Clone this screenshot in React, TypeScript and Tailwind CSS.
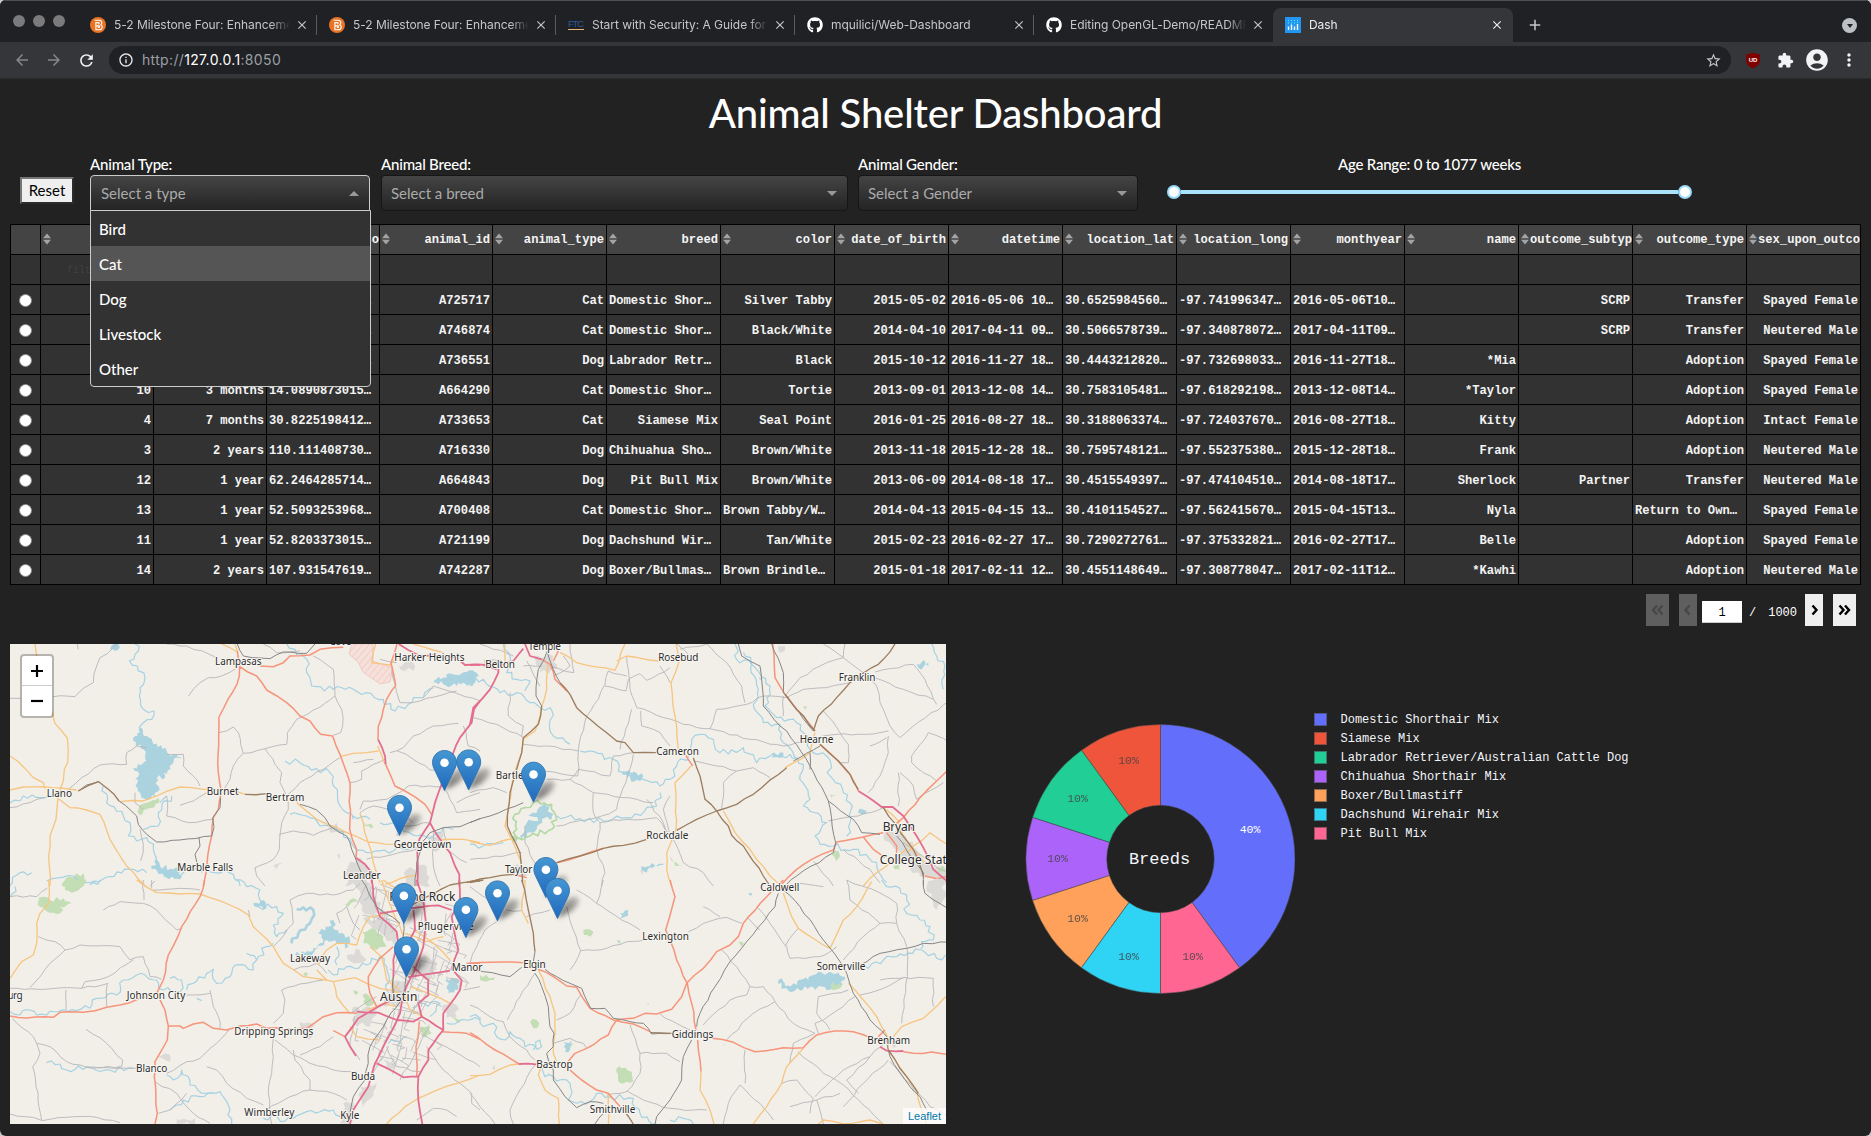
import React from "react";
import { FaGithub } from "react-icons/fa";
import {
  MdAccountCircle,
  MdAdd,
  MdArrowBack,
  MdArrowForward,
  MdClose,
  MdExtension,
  MdInfoOutline,
  MdMoreVert,
  MdRefresh,
  MdStarBorder,
} from "react-icons/md";

/* ---------------------------------------------------------------- browser */

function BrightspaceIcon() {
  return (
    <svg width="16" height="16" viewBox="0 0 16 16">
      <circle cx="8" cy="8" r="8" fill="#e87424" />
      <path
        d="M4.600 3.200h4.400c3.600 0 3.400 4.100 1.400 4.500 2.800.4 2.400 5.100-1.400 5.100H5.900V5.600h2.500c1 0 1 1.300 0 1.300M5.900 8.900h2.900c1 0 1 1.500 0 1.500H7.800"
        fill="none"
        stroke="#fff"
        strokeWidth="1.100"
      />
    </svg>
  );
}

function FtcIcon() {
  return (
    <svg width="16" height="16" viewBox="0 0 16 16">
      <text x="8" y="10" textAnchor="middle" textLength="16" fontSize="9.500" fontFamily="Liberation Sans" fill="#2a5896">
        FTC
      </text>
      <path d="M0 12.500H16" stroke="#eab57a" />
    </svg>
  );
}

function DashIcon() {
  return (
    <svg width="16" height="16" viewBox="0 0 16 16">
      <rect width="16" height="16" fill="#2196f3" />
      <path d="M3.500 13V9.500M6.500 13V7.500M9.500 13V9.500M12.500 13V7" stroke="#fff" strokeWidth="1.400" />
      <path
        d="M3 3.500h1M6 3.500h1M9 3.500h1M12 3.500h1M3 6h1M6 6h1M9 6h1M12 5.500h1"
        stroke="#5ff0e4"
        strokeWidth="1.200"
      />
    </svg>
  );
}

const tabs: { title: string; icon: React.ReactNode; active?: boolean; noLine?: boolean }[] = [
  { title: "5-2 Milestone Four: Enhancement", icon: <BrightspaceIcon /> },
  { title: "5-2 Milestone Four: Enhancement", icon: <BrightspaceIcon /> },
  { title: "Start with Security: A Guide for B", icon: <FtcIcon /> },
  { title: "mquilici/Web-Dashboard", icon: <FaGithub size={16} color="#fff" /> },
  { title: "Editing OpenGL-Demo/README", icon: <FaGithub size={16} color="#fff" />, noLine: true },
  { title: "Dash", icon: <DashIcon />, active: true },
];

function TabStrip() {
  return (
    <div className="flex h-[42px] items-end border-t border-[#4e5155] bg-[#202124] font-['Inter',sans-serif]">
      <div className="flex h-[41px] w-[78px] shrink-0 gap-2 pl-[13px] pt-[14px]">
        <i className="h-3 w-3 rounded-full bg-[#7b7b7d]" />
        <i className="h-3 w-3 rounded-full bg-[#7b7b7d]" />
        <i className="h-3 w-3 rounded-full bg-[#7b7b7d]" />
      </div>
      {tabs.map((t, i) => (
        <div
          key={i}
          className={
            t.active
              ? "relative flex h-[34px] w-[240px] shrink-0 items-center rounded-t-lg bg-[#35363a] pl-3 pr-[9px] text-[#eceded]"
              : "flex h-[34px] w-[239px] shrink-0 items-center pl-3 text-[#c4c7ca]"
          }
        >
          <span className="shrink-0">{t.icon}</span>
          <span className="ml-2 w-[178px] overflow-hidden whitespace-nowrap text-[12px] tracking-[-0.05px] [mask-image:linear-gradient(to_right,#000_88%,transparent_99%)]">
            {t.title}
          </span>
          <MdClose size={14} className="ml-[3px] shrink-0" />
          {!t.active && !t.noLine && <i className="ml-[7px] h-5 w-px bg-[#5a5c60]" />}
        </div>
      ))}
      <div className="flex h-[34px] flex-1 items-center justify-between pl-[13px] pr-[14px] text-[#c4c7ca]">
        <MdAdd size={18} />
        <span className="flex h-[15px] w-[15px] items-center justify-center rounded-full bg-[#bdc1c6]">
          <i className="mt-px border-x-[3px] border-t-4 border-x-transparent border-t-[#202124]" />
        </span>
      </div>
    </div>
  );
}

function Toolbar() {
  return (
    <div className="flex h-[37px] items-center border-b border-[#2b2c2e] bg-[#35363a] font-['Inter',sans-serif]">
      <div className="flex w-[109px] shrink-0 items-center gap-[14px] pl-[13px]">
        <MdArrowBack size={18} color="#85878b" />
        <MdArrowForward size={18} color="#85878b" />
        <MdRefresh size={19} color="#f1f3f4" />
      </div>
      <div className="flex h-7 w-[1622px] shrink-0 items-center rounded-full bg-[#202124] pl-[9px] pr-[9px]">
        <MdInfoOutline size={16} color="#e8eaed" />
        <span className="ml-2 pb-px text-[14px] tracking-[0.34px] text-[#9aa0a6]">
          http://<span className="text-white">127.0.0.1</span>:8050
        </span>
        <MdStarBorder size={17} color="#c4c7ca" className="ml-auto" />
      </div>
      <div className="flex flex-1 items-center pl-[14px]">
        <svg width="16" height="17" viewBox="0 0 16 17">
          <path d="M8 0.500c2 1.400 4.500 1.600 6.800 1.700v7c0 3.500-3.600 5.500-6.800 7.300C4.800 14.700 1.200 12.700 1.200 9.200v-7C3.500 2.100 6 1.900 8 .500z" fill="#800000" />
          <text x="8" y="10.300" textAnchor="middle" fontSize="6" fontWeight="700" fontFamily="Liberation Sans" fill="#fff">
            UD
          </text>
        </svg>
        <MdExtension size={17} color="#f1f3f4" className="ml-4" />
        <MdAccountCircle size={26} color="#f1f3f4" className="ml-[10px]" />
        <MdMoreVert size={20} color="#f1f3f4" className="ml-[9px]" />
      </div>
    </div>
  );
}

/* ---------------------------------------------------------------- filters */

function Caret({ up }: { up?: boolean }) {
  return (
    <i
      className={
        up
          ? "border-x-[5px] border-b-[5px] border-x-transparent border-b-[#999]"
          : "border-x-[5px] border-t-[5px] border-x-transparent border-t-[#999]"
      }
    />
  );
}

function SelectBox({ text, open }: { text: string; open?: boolean }) {
  return (
    <div
      className={
        open
          ? "flex h-9 items-center justify-between rounded-t-[4px] border border-[#ccc] bg-linear-to-b from-[#454545] to-[#242424] pl-[10px] pr-[10px] text-[15px] text-[#aaa]"
          : "flex h-9 items-center justify-between rounded-[4px] border border-[#161616] bg-linear-to-b from-[#454545] to-[#242424] pl-[9px] pr-[10px] text-[15px] text-[#aaa]"
      }
    >
      <span className="pt-px">{text}</span>
      <Caret up={open} />
    </div>
  );
}

function Filters() {
  return (
    <div className="flex h-[69px] items-start pl-5 font-['Lato',sans-serif] text-[15px] text-white">
      <button className="mt-[22px] h-[27px] w-[54px] border-2 border-b-[#2c2c2c] border-l-[#767676] border-r-[#2c2c2c] border-t-[#767676] bg-[#efefef] text-[15px] leading-[23px] text-black">
        Reset
      </button>
      <div className="relative ml-4 w-[280px]">
        <div className="h-5 font-medium leading-[18px] tracking-[-0.2px]">Animal Type:</div>
        <SelectBox text="Select a type" open />
        <div className="absolute left-0 top-[55px] z-10 w-[281px] rounded-b-[4px] border border-[#ccc] bg-[#323232] font-medium">
          {["Bird", "Cat", "Dog", "Livestock", "Other"].map((o) => (
            <div
              key={o}
              className={
                o === "Cat"
                  ? "h-[35px] bg-[#555] pl-2 leading-[36px]"
                  : "h-[35px] pl-2 leading-[36px]"
              }
            >
              {o}
            </div>
          ))}
        </div>
      </div>
      <div className="ml-[11px] w-[467px]">
        <div className="h-5 font-medium leading-[18px] tracking-[-0.2px]">Animal Breed:</div>
        <SelectBox text="Select a breed" />
      </div>
      <div className="ml-[10px] w-[280px]">
        <div className="h-5 font-medium leading-[18px] tracking-[-0.2px]">Animal Gender:</div>
        <SelectBox text="Select a Gender" />
      </div>
      <div className="ml-[29px] w-[525px]">
        <div className="h-5 text-center font-medium leading-[18px] tracking-[-0.2px]">Age Range: 0 to 1077 weeks</div>
        <div className="mt-[10px] flex h-[14px] items-center">
          <i className="h-[14px] w-[14px] rounded-full border-2 border-[#96dbfa] bg-white" />
          <i className="h-1 flex-1 bg-[#abe2fb]" />
          <i className="h-[14px] w-[14px] rounded-full border-2 border-[#96dbfa] bg-white" />
        </div>
      </div>
    </div>
  );
}

/* ------------------------------------------------------------------ table */

const columns = [
  "rec_num",
  "age_upon_outcome",
  "age_upon_outcome_in_weeks",
  "animal_id",
  "animal_type",
  "breed",
  "color",
  "date_of_birth",
  "datetime",
  "location_lat",
  "location_long",
  "monthyear",
  "name",
  "outcome_subtype",
  "outcome_type",
  "sex_upon_outcome",
];

const rows: string[][] = [
  ["1", "1 year", "52.9215277777…", "A725717", "Cat", "Domestic Shor…", "Silver Tabby", "2015-05-02", "2016-05-06 10…", "30.6525984560…", "-97.741996347…", "2016-05-06T10…", "", "SCRP", "Transfer", "Spayed Female"],
  ["2", "3 years", "156.767857142…", "A746874", "Cat", "Domestic Shor…", "Black/White", "2014-04-10", "2017-04-11 09…", "30.5066578739…", "-97.340878072…", "2017-04-11T09…", "", "SCRP", "Transfer", "Neutered Male"],
  ["9", "1 year", "58.8255952380…", "A736551", "Dog", "Labrador Retr…", "Black", "2015-10-12", "2016-11-27 18…", "30.4443212820…", "-97.732698033…", "2016-11-27T18…", "*Mia", "", "Adoption", "Spayed Female"],
  ["10", "3 months", "14.0890873015…", "A664290", "Cat", "Domestic Shor…", "Tortie", "2013-09-01", "2013-12-08 14…", "30.7583105481…", "-97.618292198…", "2013-12-08T14…", "*Taylor", "", "Adoption", "Spayed Female"],
  ["4", "7 months", "30.8225198412…", "A733653", "Cat", "Siamese Mix", "Seal Point", "2016-01-25", "2016-08-27 18…", "30.3188063374…", "-97.724037670…", "2016-08-27T18…", "Kitty", "", "Adoption", "Intact Female"],
  ["3", "2 years", "110.111408730…", "A716330", "Dog", "Chihuahua Sho…", "Brown/White", "2013-11-18", "2015-12-28 18…", "30.7595748121…", "-97.552375380…", "2015-12-28T18…", "Frank", "", "Adoption", "Neutered Male"],
  ["12", "1 year", "62.2464285714…", "A664843", "Dog", "Pit Bull Mix", "Brown/White", "2013-06-09", "2014-08-18 17…", "30.4515549397…", "-97.474104510…", "2014-08-18T17…", "Sherlock", "Partner", "Transfer", "Neutered Male"],
  ["13", "1 year", "52.5093253968…", "A700408", "Cat", "Domestic Shor…", "Brown Tabby/W…", "2014-04-13", "2015-04-15 13…", "30.4101154527…", "-97.562415670…", "2015-04-15T13…", "Nyla", "", "Return to Own…", "Spayed Female"],
  ["11", "1 year", "52.8203373015…", "A721199", "Dog", "Dachshund Wir…", "Tan/White", "2015-02-23", "2016-02-27 17…", "30.7290272761…", "-97.375332821…", "2016-02-27T17…", "Belle", "", "Adoption", "Spayed Female"],
  ["14", "2 years", "107.931547619…", "A742287", "Dog", "Boxer/Bullmas…", "Brown Brindle…", "2015-01-18", "2017-02-11 12…", "30.4551148649…", "-97.308778047…", "2017-02-11T12…", "*Kawhi", "", "Adoption", "Neutered Male"],
];

const gridRow =
  "grid grid-cols-[30px_repeat(4,113px)_repeat(12,114px)] border-b border-l border-black";

function SortIcon() {
  return (
    <svg width="8" height="12" viewBox="0 0 8 12" className="-mt-px shrink-0">
      <path d="M4 0.500 8 5.300H0zM4 11.500 0 6.700H8z" fill="#a3a3a3" />
    </svg>
  );
}

function DataTable() {
  return (
    <div className="ml-[10px] w-[1851px] border-t border-black font-['Liberation_Mono',monospace] text-[12.15px] font-bold text-[#f4f4f4]">
      <div className={gridRow}>
        <div className="h-[29px] border-r border-black bg-[#444]" />
        {columns.map((c) => (
          <div
            key={c}
            className={
              c.length > 13
                ? "flex h-[29px] items-center overflow-hidden border-r border-black bg-[#444] pl-[2px]"
                : "flex h-[29px] items-center overflow-hidden border-r border-black bg-[#444] pl-[2px] pr-[2px]"
            }
          >
            <SortIcon />
            <span className="-ml-px flex min-w-0 flex-1 justify-end pt-px">
              <span className={c.length > 13 ? "w-[102px] shrink-0 overflow-hidden whitespace-nowrap" : "whitespace-nowrap"}>{c}</span>
            </span>
          </div>
        ))}
      </div>
      <div className={gridRow}>
        <div className="h-[29px] border-r border-black bg-[#323232]" />
        {columns.map((c, i) => (
          <div key={c} className="h-[29px] overflow-hidden border-r border-black bg-[#323232] pl-[26px] text-[10px] font-normal leading-[32px] text-[#414141]">
            {i === 0 ? "filter data..." : ""}
          </div>
        ))}
      </div>
      {rows.map((r, k) => (
        <div key={k} className={gridRow}>
          <div className="flex h-[29px] items-center justify-center border-r border-black bg-[#323232] pt-px">
            <i className="h-[13px] w-[13px] rounded-full border border-[#8a8a8a] bg-white" />
          </div>
          {r.map((v, i) => (
            <div
              key={i}
              className={
                v.endsWith("…")
                  ? "h-[29px] overflow-hidden whitespace-nowrap border-r border-black bg-[#323232] pl-[2px] text-left leading-[33px]"
                  : "h-[29px] overflow-hidden whitespace-nowrap border-r border-black bg-[#323232] pr-[2px] text-right leading-[33px]"
              }
            >
              {v}
            </div>
          ))}
        </div>
      ))}
    </div>
  );
}

function Chevrons({ d }: { d: string }) {
  return (
    <svg width="13" height="12" viewBox="0 0 13 12" fill="none" stroke="currentColor" strokeWidth="2.400">
      <path d={d} />
    </svg>
  );
}

function Pagination() {
  return (
    <div className="flex h-[59px] items-start justify-end pr-[15px] pt-[9px] font-['Liberation_Mono',monospace] text-[12px] text-white">
      <span className="flex h-8 w-[23px] items-center justify-center bg-[#5f5f5f] text-[#474747]">
        <Chevrons d="M6 1.500 2 6l4 4.500M11.500 1.500 7.500 6l4 4.500" />
      </span>
      <span className="ml-[10px] flex h-8 w-[18px] items-center justify-center bg-[#5f5f5f] text-[#474747]">
        <Chevrons d="M8.500 1.500 4.500 6l4 4.500" />
      </span>
      <span className="ml-[5px] mt-[7px] h-[22px] w-10 border-b border-[#ccc] bg-white text-center leading-[24px] text-black">
        1
      </span>
      <span className="ml-[7px] mt-[7px] leading-[25px]">/</span>
      <span className="ml-[12px] mt-[7px] leading-[25px]">1000</span>
      <span className="ml-[8px] flex h-8 w-[18px] items-center justify-center bg-[#efefef] text-black">
        <Chevrons d="M4.500 1.500 8.500 6l-4 4.500" />
      </span>
      <span className="ml-[10px] flex h-8 w-[23px] items-center justify-center bg-[#efefef] text-black">
        <Chevrons d="M1.500 1.500 5.500 6l-4 4.500M7 1.500 11 6l-4 4.500" />
      </span>
    </div>
  );
}

/* -------------------------------------------------------------------- map */

/* Each tile keeps its geometry in thirds of a pixel from its own corner. */
type Tile = {
  x: number;
  y: number;
  urban: string;
  green: string;
  lake: string;
  water: string;
  minor: string;
  rail: string;
  brown: string;
  orange: string;
  salmon: string;
  pink: string;
};

const tiles: Tile[] = [
  {
    x: -10,
    y: -8,
    urban: "M1045 690 1085 665 1105 715 1085 750 1035 750Z M980 570 1010 560 1015 585 990 590Z M1290 600 1330 590 1320 640 1280 640Z M820 690 850 680 830 698Z M1220 700 1280 690 1290 750 1210 750Z M1190 85 1240 80 1240 105 1200 100Z M1010 655 1020 655 1020 670Z",
    green: "M415 520 440 500 475 485 478 500 440 520 415 545Z M200 725 250 712 255 740 240 755 185 750Z M1090 558 1120 570 1115 578 1095 570Z",
    lake: "M405 300 412 310 425 275 432 300 455 308 460 325 500 345 512 360 545 362 520 380 512 400 490 410 495 425 470 425 475 450 465 480 425 485 412 440 405 430 418 415 400 395 430 380 435 365 430 340 400 315Z M470 660 480 690 520 700 545 705 540 730 500 725 455 700Z M1300 140 1315 122 1340 125 1350 112 1375 118 1400 108 1425 108 1420 145 1390 140 1370 150 1330 145Z M340 24 355 24 345 45 330 40Z",
    water: "M405 24 415 45 388 75 412 90 435 125 420 155 418 180 430 220 462 225 455 250 430 260 425 290 M860 24 890 55 920 70 920 110 935 150 1000 160 1060 160 1100 170 1150 190 1185 225 1225 205 1240 185 1270 185 1300 155 M855 375 900 380 950 398 990 410 1000 450 1015 500 1040 530 1060 550 M870 535 920 540 960 570 1030 590 1060 630 1100 650 1180 645 1250 635 M1140 560 1190 570 1250 600 1300 600 1330 575 1360 580 M310 450 320 500 370 540 390 560 385 600 410 615 440 605 460 640 475 690 500 710 540 720 580 700 620 700 700 715 720 750 M515 480 475 530 475 570 430 580 M500 480 480 500 M30 500 70 480 135 485 175 475 M30 750 60 710 95 710 M140 735 180 725 220 720 260 740 330 722 400 700 440 710 M1060 540 1110 550",
    minor: "M30 187 62 187 M160 182 225 182 252 156 280 140 290 90 300 65 340 35 350 24 M232 24 235 40 M205 460 245 425 300 387 380 385 380 350 410 330 440 335 M566 180 600 140 625 125 665 120 712 95 M500 24 560 30 650 65 M657 290 700 273 715 290 722 325 730 352 795 338 860 325 862 290 890 250 940 222 1005 180 1025 220 1028 270 1022 290 1000 298 M730 352 700 390 690 430 672 460 M795 338 825 385 845 410 840 440 860 480 865 520 845 560 838 640 820 670 765 695 770 720 795 750 M860 480 900 440 970 400 1020 365 M500 355 550 355 550 390 580 420 600 450 M540 508 580 495 620 470 M500 480 500 540 525 545 565 560 640 550 M405 470 405 500 430 520 M420 580 430 625 422 675 M838 595 880 585 940 598 1000 575 1045 590 M1050 440 1085 430 1085 405 1120 385 1155 370 M1170 350 1210 335 1240 300 1300 270 1375 262 M1192 345 1240 370 1290 402 1330 400 M1005 180 1000 100 940 60 M1080 520 1090 495 1160 490 1225 450 1330 452 M1175 100 1190 170 1200 200 1260 195 1370 165 M1100 670 1180 655 1250 640 M1390 270 1405 330 1440 345 M1330 455 1350 490 1370 530 1440 520 M30 515 90 500 135 485 M1270 185 1300 150 1330 160 1440 195 M1060 380 1120 370 M790 24 830 50 900 45 M1080 530 1120 510 1200 525 1240 560 M1140 70 1190 80 M1370 500 1440 470 M1300 590 1300 690 1320 750 M1330 575 1340 640 1400 680 M450 750 465 735 M1190 600 1210 570 1290 560",
    rail: "M235 465 260 447 296 437 M357 495 410 540 415 565 440 595 470 618 540 612 635 600 642 575 638 545 660 515 662 485 M597 605 600 630 585 655 592 685 M900 505 950 522 975 545 990 570 1040 600 1055 640 1075 690 1090 735 M730 60 810 68 850 48 920 52 945 24 M712 24 730 60 M1440 548 1380 572 1330 575 1290 590 1265 620 1250 680 1245 750",
    brown: "M235 465 296 437 325 460 357 495 M735 475 800 473 M1440 730 1400 740",
    orange: "M105 24 110 60 M155 225 165 262 185 285 202 306 203 380 193 400 190 435 180 462 173 495 168 550 150 600 146 660 150 750 M30 360 70 392 100 425 130 440 135 458 M30 462 70 453 155 455 230 462 M178 490 210 515 260 522 300 535 330 610 380 690 437 750 M360 497 430 495 470 480 500 466 540 453 610 460 700 463 735 475 M880 475 895 505 950 550 1040 590 1104 618 1180 625 M1020 362 1060 352 1100 350 1135 345 M1080 532 1104 618 1130 710 1140 740 M1133 330 1155 385 M1127 24 1115 80 1170 87 1185 70 M705 24 712 45 M665 24 712 48 M1440 620 1390 610 1320 612 M1155 745 1200 728 1250 718 M1240 24 1330 50",
    salmon: "M712 45 714 60 719 90 718 120 700 165 657 243 656 300 655 410 664 470 655 520 640 545 635 600 623 660 618 710 610 750 M719 92 770 120 800 162 860 200 900 240 930 255 962 295 998 300 1020 355 1050 440 1049 580 1070 640 1068 665 M780 90 820 92 850 80 870 60 930 57 960 40 1030 34 M1191 24 1173 80 1187 148 1160 190 1150 220 1135 270 1134 310 M1157 385 1185 450 1215 465 1275 505 1295 535",
    pink: "M1134 310 1155 360 1157 385 M1196 24 1225 42 1260 60 1300 58 1370 65 1395 87 1440 87 M1440 195 1422 220 1415 260 1380 305 1360 350 1330 430 1305 500 1290 560 1258 610 1252 650 1252 750 M1290 560 1320 610 1350 650 1365 690 1378 715 1378 750 M1068 665 1095 685 1115 710 1115 740",
  },
  {
    x: 460,
    y: -8,
    urban: "M1240 600 1280 580 1340 640 1380 690 1440 700 1440 750 1350 720 1320 690 1290 650Z M925 30 945 30 945 45 930 50Z M190 60 250 60 260 100 210 110Z M40 70 90 70 90 90 40 95Z M130 690 170 690 170 720 130 720Z M510 705 525 700 520 718Z",
    green: "M1085 655 1105 645 1110 660 1098 675Z M980 420 990 425 985 435Z M600 660 620 680 640 690 615 690Z M1080 475 1100 478 1085 485Z M1270 690 1295 680 1290 705Z M1400 695 1425 695 1410 710Z M125 600 145 605 130 618Z M1000 210 1012 212 1005 222Z",
    lake: "M170 560 195 555 210 540 175 540 215 510 240 510 245 550 225 545 200 580 155 610 150 600 165 580Z M0 105 20 110 15 135 0 150Z M515 690 540 690 550 675 548 695 530 710Z M1168 518 1195 515 1190 532 1175 535Z M1340 85 1355 78 1375 80 1375 90 1345 95Z M460 405 520 420 500 432 470 425Z M865 120 878 125 870 132Z M905 352 940 350 930 365 905 365Z",
    water: "M0 130 40 130 90 170 140 170 180 200 210 215 240 215 250 300 300 325 M330 345 360 345 430 370 460 410 520 430 570 450 600 430 620 390 655 360 665 310 690 295 730 310 750 350 820 335 860 380 900 360 960 355 1000 385 990 430 1020 490 1000 510 1070 560 1035 600 1050 625 1090 630 1150 640 1220 680 1250 740 M105 24 120 80 110 110 140 130 180 135 165 165 M260 540 330 548 400 555 470 545 560 510 570 470 M795 24 800 70 845 80 865 160 850 205 880 260 930 265 940 320 980 370 M820 50 860 100 900 150 885 210 920 245 980 260 1000 290 1020 340 1070 360 1080 420 1120 470 1140 500 1140 560 1130 600 M1385 24 1400 60 1425 90 1420 160 M0 625 40 630 100 620 M560 690 580 685",
    minor: "M120 170 115 240 160 270 155 300 M10 245 80 265 160 305 M160 325 230 330 325 345 350 240 385 190 405 145 415 105 470 120 M405 150 468 165 475 130 510 113 530 133 600 95 M325 345 323 420 205 400 M300 430 325 400 420 420 430 360 490 350 M470 60 480 160 500 215 640 265 720 278 840 310 940 330 1060 300 1230 290 1255 285 M570 90 600 140 M630 40 710 24 770 80 815 150 825 200 M720 278 740 220 830 205 880 180 950 185 M945 180 990 125 1050 90 1120 65 1125 24 M950 185 1000 160 1070 155 1140 140 M1060 24 1120 65 1180 110 1220 150 1230 200 1260 270 1290 305 1330 270 1440 195 M1215 108 1330 85 1365 130 1400 205 M1215 125 1300 160 1390 190 M940 180 940 240 M1060 225 1110 290 1135 325 1135 380 1110 380 M485 220 450 340 M512 225 515 270 570 290 600 330 M490 355 440 520 395 540 300 560 260 570 M230 430 300 430 370 470 500 490 550 500 M370 470 370 530 390 560 380 640 405 710 395 750 M390 560 470 550 560 545 600 600 M670 375 740 390 800 405 850 395 900 425 M800 405 760 440 755 520 M0 470 70 455 110 470 M0 670 120 655 155 650 M610 610 640 680 700 710 730 750 M1255 300 1255 350 1230 420 1195 470 M1440 320 1375 290 1325 360 1325 380 1360 410 1400 435 M1290 410 1330 450 1340 490 1420 440 M1285 410 1285 510 M1075 555 1165 540 1240 515 M1030 675 1090 750 M1120 640 1200 700 1230 740 M165 570 165 620 200 690 M530 490 580 560 600 600 M300 24 312 110 240 90 M620 24 660 60 M130 60 30 24 M600 480 580 520 600 600 M1300 620 1440 720 M160 90 215 90 M250 120 300 90 280 60 M170 75 210 150 M1250 305 1200 330",
    rail: "M232 45 205 100 198 180 215 210 M232 50 250 100 270 140 M805 24 815 60 870 90 880 210 930 270 950 285 1020 390 1075 495 1097 620 1090 650 980 720 950 745 M905 24 940 110 940 170 1030 285 M1075 495 1150 550 1175 590 1230 595 M1280 600 1360 710 1360 750 M970 375 1050 330 M0 560 60 540 160 500 M1020 400 1020 350",
    brown: "M1275 24 1240 70 1225 85 1185 108 1140 140 1100 185 1045 240 1030 285 M270 140 300 175 320 215 360 250 410 290 440 315 465 320 490 350 560 350 M670 365 690 420 705 490 740 525 775 570 785 598 820 630 880 720 900 750 M620 583 680 550 740 525 800 505 850 475 950 395 M215 210 205 265 160 305 155 350 120 470 112 570 150 650 158 740 M260 680 330 660 400 637 460 628 530 610 M0 738 60 725 130 715 M1035 285 945 175 M1050 325 1105 375 1140 415 1165 460 M1240 515 1330 640 1360 720",
    orange: "M100 24 105 80 M270 50 320 80 435 103 465 24 M440 75 470 60 565 75 M618 24 628 75 603 140 615 240 625 340 M235 80 230 160 210 240 195 285 160 310 155 350 130 420 105 570 125 610 155 680 M0 617 60 628 125 608 M663 390 615 440 618 500 618 580 590 650 590 700 605 750 M760 525 795 590 840 640 900 720 940 750 M945 395 1020 350 1035 290 M1240 515 1285 555 1300 600 1325 640 1365 680 M1310 650 1380 590 1440 630 M1180 750 1220 710 1310 640",
    salmon: "M215 70 240 85 255 130 290 165 M908 24 915 125 945 175 1035 285 M1050 325 1105 375 1140 415 1165 465 M645 355 668 390 M1440 395 1400 435 1350 485 1300 545 1265 575 M1240 590 1180 603 1100 618 1090 642 1025 670 980 700 935 745 M1180 603 1210 640 1245 665 M1365 720 1400 728 1440 720 M1250 590 1280 630 1280 680 M265 45 250 75 M260 680 330 660 400 637 M130 715 170 725",
    pink: "M0 87 45 87 80 100 M160 38 130 75 85 90 85 110 60 160 10 215 0 265 M165 24 180 60 215 70 M1165 465 1235 513 1268 513 1300 540 1340 600 1375 665 1390 700 1440 745",
  },
  {
    x: -10,
    y: 236,
    urban: "M1070 0 1110 10 1130 50 1150 90 1120 110 1085 90Z M1090 115 1170 115 1190 160 1180 195 1130 150Z M1040 225 1080 210 1100 240 1060 250Z M1230 210 1310 245 1290 300 1240 270Z M1190 300 1230 300 1220 370 1150 380Z M1060 380 1130 390 1110 440 1060 430Z M1330 375 1370 375 1370 410 1340 415Z M470 530 510 525 510 545Z M530 718 585 715 585 732 530 732Z M900 425 945 435 925 480Z M1030 670 1060 670 1050 732 1020 732Z M1080 620 1130 610 1090 690Z M1150 540 1190 555 1170 570Z",
    green: "M195 0 260 0 225 35 195 30Z M115 65 130 50 150 60 190 55 215 70 180 80 190 90 160 98 120 80Z M1085 155 1120 145 1150 170 1160 200 1130 210 1090 190Z M1095 340 1115 360 1120 385 1090 365Z M1260 440 1290 430 1295 460 1265 470Z M1035 75 1060 55 1075 65 1045 80Z M910 280 925 282 915 292Z M1290 290 1305 290 1300 310Z M1360 415 1385 415 1375 430Z M1060 330 1075 335 1070 345Z",
    lake: "M885 225 930 215 960 190 970 180 955 160 985 140 1000 120 1005 150 1050 180 1045 200 1010 190 980 180 950 205 920 228Z M760 70 790 60 800 85 770 82Z M1340 295 1370 295 1375 330 1345 340Z",
    water: "M705 0 740 20 780 30 775 80 830 80 850 100 820 135 830 170 860 150 M985 270 1000 285 1040 260 1100 255 1140 230 1160 260 1160 330 1190 350 1220 345 M1010 200 1010 255 M30 395 60 405 90 390 110 405 140 405 175 395 270 385 290 355 350 345 370 300 410 285 470 300 490 330 540 335 545 300 510 295 M560 330 580 310 620 280 640 268 650 310 690 290 705 255 760 270 770 240 800 200 820 190 M140 548 180 552 200 570 260 560 330 570 400 565 M500 585 520 600 545 570 570 615 620 640 660 635 690 690 695 732 M510 690 550 660 600 650 650 640 M790 715 880 715 920 695 1000 690 1020 710 M1165 490 1220 470 M1260 370 1320 370 1290 410 M1340 430 1440 420 M270 15 300 0 M30 50 45 20 M740 220 770 240 M590 355 605 362",
    minor: "M30 50 110 50 142 24 M115 170 165 185 195 210 240 195 360 200 390 240 430 230 450 290 485 298 M90 323 150 250 195 210 M30 325 245 325 325 310 M245 325 255 305 325 290 400 240 M198 330 198 390 M322 310 320 380 M310 90 360 65 430 70 470 90 530 150 545 145 M430 0 432 60 M37 415 100 470 110 490 120 520 98 560 108 620 125 720 M110 490 150 500 200 545 260 562 365 560 368 540 320 490 258 448 M258 562 440 565 M30 702 100 712 127 722 200 712 290 712 360 728 M500 580 560 545 600 535 650 490 690 445 M620 560 650 570 680 610 740 655 790 675 M630 330 640 380 655 410 660 445 M560 345 630 340 M465 605 530 640 580 700 630 730 M475 700 510 690 560 640 M820 470 820 530 815 580 805 640 815 732 M845 330 855 360 850 400 820 430 M845 330 900 312 970 300 M825 480 880 525 930 550 1000 570 1070 575 M900 525 960 500 1000 470 M800 690 870 650 930 630 1000 640 1040 660 M880 510 885 540 930 600 930 632 M745 90 750 110 M820 200 880 130 870 60 920 40 1000 45 1060 30 1080 10 M1280 500 1330 570 1380 610 1415 640 1415 670 1440 690 M1250 720 1300 685 1340 690 1370 710 M1290 440 1200 600 M1160 500 1190 560 1260 575 M1050 400 1080 380 1130 350 M1060 440 1050 500 1080 540 M455 0 455 25 M460 30 540 25 600 30 M1020 130 1010 100 1040 80 1060 130 1080 150 M880 270 950 250 980 280 M1390 330 1440 320 M1300 480 1440 560",
    rail: "M1210 120 1210 170 1222 260 1215 340 1160 420 1110 500 1095 600 1060 650 1050 700 M1085 0 1130 80 1200 130",
    brown: "M1230 80 1350 15 1440 3 M1180 290 1180 340",
    orange: "M146 0 146 70 120 100 110 130 110 190 100 225 65 245 30 295 M410 0 470 38 540 42 600 42 690 75 745 105 760 140 820 200 850 250 910 290 1000 305 1065 293 1100 310 1140 325 1200 340 M1000 305 1010 350 1050 400 M955 255 980 210 1010 190 1070 195 1090 140 1110 110 1160 100 M1145 0 1165 60 1200 140 1210 170 M1050 440 1070 470 1140 480 M1160 732 1215 680 1255 655 1300 635 1370 610 1440 585 M1240 150 1300 190 1350 240 M1210 340 1230 390 1270 410 M1230 320 1260 330 1350 370 M950 270 980 300 M1110 200 1145 230 1160 300 1200 330 M1215 160 1280 185 1330 170 M1190 380 1150 370 1100 390 M1200 30 1150 0",
    salmon: "M614 0 600 50 545 140 505 225 490 300 470 340 495 390 505 438 502 480 465 545 463 590 472 700 465 732 M30 408 80 414 160 412 180 397 250 397 320 382 360 375 390 368 440 350 M505 438 540 438 550 445 580 432 610 427 640 445 680 450 720 438 770 432 800 445 920 445 970 410 1010 398 1070 400 M1180 200 1140 235 1105 290 1110 340 1130 380 M1000 452 1035 470 M1440 478 1400 460 1325 455 M1258 425 1248 500 1250 590 M1400 250 1440 250",
    pink: "M1115 0 1120 50 1140 110 1190 155 1195 190 1180 240 1180 290 M1140 100 1230 85 1315 76 1355 90 M1250 0 1270 60 1278 130 1270 200 1240 280 1210 340 1205 370 1200 400 1150 500 1125 550 1105 620 1060 690 1050 732 M1070 395 1135 398 1190 420 1240 425 1265 410 1330 450 M1068 528 1035 470 1075 415 1135 380 1195 350 M1130 550 1210 592 1255 590 1285 540 1285 510 1330 450 1330 400 1380 330 1385 300 1355 265 1375 210 1355 110 1380 60 1378 0 M1225 292 1350 272 M1265 410 1255 370 1285 345 1285 300 1240 260 M1240 90 1245 150 1220 200 1215 260 M1255 590 1255 660 1267 732",
  },
  {
    x: 460,
    y: 236,
    urban: "M1370 20 1390 0 1425 0 1420 60 1400 90Z M1245 475 1290 480 1270 505Z M65 565 75 555 75 570Z",
    green: "M440 565 455 565 485 575 490 605 450 610Z M180 425 200 420 205 440 190 445Z M340 150 370 155 360 170 342 165Z M30 285 75 290 60 300 30 300Z M440 180 452 182 450 192Z M805 185 822 190 815 200Z M1070 310 1120 310 1100 328 1070 330Z M530 370 536 370 536 375Z M290 490 310 490 300 510Z",
    lake: "M925 300 940 305 945 318 980 315 985 300 1015 300 1030 285 1080 275 1125 290 1115 315 1090 308 1070 330 1020 320 975 332 950 325 925 312Z M280 485 305 480 300 510 285 515Z M450 100 475 90 465 110 450 115Z M835 40 848 40 842 48Z M755 490 768 490 762 497Z",
    water: "M0 410 30 415 40 440 70 430 80 470 105 480 120 455 150 475 165 500 215 500 210 480 190 510 M215 560 225 590 250 590 300 610 295 660 360 665 380 640 420 650 490 655 510 700 560 732 M600 720 640 715 670 732 M1235 0 1250 20 1290 25 1310 60 1310 100 1350 120 1380 140 1390 180 1355 185 1350 210 1280 230 1180 260 M1355 210 1400 235 1440 225",
    minor: "M0 250 20 200 45 150 80 125 M110 90 155 92 M170 110 240 90 M290 80 310 150 332 212 M320 30 380 70 455 120 510 150 M380 70 400 0 M332 212 410 205 470 185 525 180 M332 212 300 270 M655 155 700 130 770 112 815 130 M195 280 150 350 112 420 M0 375 25 385 60 410 100 425 120 470 170 510 195 540 M332 345 300 400 260 420 M250 490 300 475 340 490 350 505 M480 435 510 520 510 580 470 635 410 645 M570 402 620 430 660 450 M700 435 780 360 830 345 840 320 800 260 755 210 M840 320 880 320 915 365 970 430 1035 460 M915 365 850 400 770 480 M510 520 590 520 630 545 M470 632 520 660 600 685 670 690 710 690 M195 555 150 630 120 690 M0 640 30 680 75 732 M825 510 825 610 M760 732 775 670 810 615 870 670 910 720 M960 550 970 490 1035 460 M985 515 1060 580 1120 615 1180 675 1240 732 M1135 330 1045 350 1040 400 1080 450 M1155 350 1060 420 1035 430 1045 460 M1130 0 1140 60 1230 130 1280 130 1310 200 1312 290 1295 430 M1170 345 1240 325 1300 292 1390 295 1390 380 M1230 130 1180 170 1120 240 M1130 0 1200 25 1280 70 1280 130 M860 80 900 130 950 200 960 235 1050 230 1100 200 M985 145 945 200 M1250 480 1200 530 1130 600 1165 640 M1255 540 1180 610 1120 680 M935 610 980 600 1030 655 1020 700 M1035 650 1120 570 1200 530 M1040 660 1110 640 M1260 545 1380 680 1440 710 M830 110 870 150 M1230 300 1300 295 M960 680 1040 660 1060 732 M750 110 700 80 M120 690 130 732 M0 20 60 60 M990 10 1060 20",
    rail: "M190 245 195 215 M195 280 215 320 235 380 240 440 252 460 250 500 230 520 235 540 250 570 250 600 285 650 320 683 360 665 400 670 M0 265 40 275 120 290 155 262 M225 268 260 290 300 310 335 325 362 385 405 385 430 415 480 425 520 430 545 462 610 460 M925 40 915 80 780 245 735 320 690 400 680 440 M665 480 640 530 635 590 635 600 600 660 560 710 555 732 M940 30 990 80 1060 180 1110 245 1130 280 1150 340 1200 420 1250 470 1260 530 1320 620 1350 650 1370 690 M1170 255 1230 220 1310 205 1360 190 1440 187 M375 732 400 700 M1360 0 1365 40 1440 90",
    brown: "M155 0 175 90 190 160 195 215 M460 690 490 732 M540 458 605 460 M1255 510 1310 590 1345 640 M0 8 40 0",
    orange: "M165 0 155 90 175 130 M205 270 240 350 255 400 255 460 250 520 260 545 M0 587 60 583 120 555 147 552 M215 555 205 585 225 630 265 655 268 732 M415 640 415 732 M693 575 690 630 720 690 732 732 M940 40 965 110 985 145 1060 195 1080 205 1090 185 1120 120 1160 80 1205 5 M1135 310 1180 360 1220 410 1250 465 1255 510 1310 590 1340 630 1355 690 1370 732 M1440 340 1360 415 1295 440 1270 470 M1000 505 950 560 935 610 890 680 850 732 M1045 732 1060 720 1120 732 1200 720 1240 732",
    salmon: "M0 250 160 248 M205 268 250 290 290 318 320 322 360 385 430 420 490 432 540 455 M600 0 615 50 587 150 600 180 620 240 652 310 665 370 678 450 M683 480 693 575 M940 0 890 50 820 130 805 170 780 195 740 215 700 265 650 310 635 350 605 388 560 402 525 400 490 415 440 420 415 465 350 505 315 520 290 550 M725 475 790 487 855 515 940 503 1000 503 1040 465 1095 453 1150 455 1200 472 M0 458 75 510 147 552 M300 570 335 600 380 630 415 640 460 690 M1300 515 1330 520 1385 516 1440 525 M1225 470 1245 450",
    pink: "M147 552 200 553 M1230 500 1250 512 1300 513",
  },
];

/* Roughens straight polylines so that roads and creeks bend naturally. */
function roughen(d: string, amp: number, step: number): string {
  let seed = d.length * 7 + 3;
  const rnd = () => {
    seed = (seed * 16807) % 2147483647;
    return seed / 2147483647 - 0.5;
  };
  return d
    .split("M")
    .filter((s) => s.trim())
    .map((part) => {
      const closed = part.includes("Z");
      const n = part.replace("Z", "").trim().split(/\s+/).map(Number);
      if (closed) n.push(n[0], n[1]);
      let out = `M${n[0]} ${n[1]}`;
      for (let i = 2; i < n.length; i += 2) {
        const dx = n[i] - n[i - 2];
        const dy = n[i + 1] - n[i - 1];
        const len = Math.hypot(dx, dy) || 1;
        const k = Math.max(1, Math.round(len / step));
        for (let j = 1; j < k; j++) {
          const off = amp * 1.7 * rnd();
          const x = n[i - 2] + (dx * j) / k - (dy / len) * off;
          const y = n[i - 1] + (dy * j) / k + (dx / len) * off;
          out += ` ${x.toFixed(1)} ${y.toFixed(1)}`;
        }
        out += ` ${n[i]} ${n[i + 1]}`;
      }
      return closed ? out + "Z" : out;
    })
    .join(" ");
}

/* Short residential streets scattered through the built-up corridor. */
function streets(): string {
  const zones = [
    [1230, 290, 60, 110],
    [1140, 420, 80, 70],
    [1280, 130, 80, 80],
    [1120, 60, 50, 60],
    [1310, 280, 50, 60],
    [1200, 480, 70, 60],
  ];
  let seed = 41;
  const rnd = () => {
    seed = (seed * 16807) % 2147483647;
    return seed / 2147483647;
  };
  let d = "";
  for (const [cx, cy, rx, ry] of zones) {
    for (let i = 0; i < 16; i++) {
      const x = cx + (rnd() * 2 - 1) * rx;
      const y = cy + (rnd() * 2 - 1) * ry;
      const a = (i % 2 ? 1.9 : 0.35) + (rnd() - 0.5) * 0.5;
      const l = 30 + rnd() * 50;
      const x2 = x + Math.cos(a) * l;
      const y2 = y + Math.sin(a) * l;
      d += `M${x.toFixed(0)} ${y.toFixed(0)} ${x2.toFixed(0)} ${y2.toFixed(0)} ${(x2 + (rnd() - 0.5) * 40).toFixed(0)} ${(y2 + 20 * rnd()).toFixed(0)} `;
    }
  }
  return d;
}

/* tile index, left, right, baseline, size */
const labels: [string, number, number, number, number, number][] = [
  ["Cove", 0, 988, 1054, 27, 30],
  ["Lampasas", 0, 645, 785, 87, 30],
  ["Harker Heights", 0, 1183, 1394, 74, 30],
  ["Llano", 0, 140, 216, 482, 30],
  ["Burnet", 0, 620, 716, 477, 30],
  ["Bertram", 0, 797, 913, 494, 30],
  ["Georgetown", 0, 1181, 1354, 636, 30],
  ["Marble Falls", 0, 532, 699, 705, 30],
  ["Leander", 0, 1029, 1142, 730, 30],
  ["Temple", 1, 175, 273, 43, 30],
  ["Belton", 1, 46, 135, 96, 30],
  ["Rosebud", 1, 565, 685, 74, 30],
  ["Franklin", 1, 1106, 1216, 135, 30],
  ["Hearne", 1, 989, 1090, 322, 30],
  ["Cameron", 1, 559, 687, 356, 30],
  ["Bartlett", 1, 77, 182, 428, 30],
  ["Rockdale", 1, 529, 655, 608, 30],
  ["Bryan", 1, 1238, 1335, 585, 36],
  ["College Station", 1, 1229, 1484, 685, 36],
  ["Taylor", 1, 105, 187, 712, 30],
  ["Round Rock", 2, 1168, 1366, 63, 36],
  ["Pflugerville", 2, 1253, 1420, 150, 30],
  ["Manor", 2, 1355, 1447, 272, 30],
  ["Lakeway", 2, 870, 990, 245, 30],
  ["Austin", 2, 1140, 1252, 364, 36],
  ["burg", 2, 6, 68, 358, 30],
  ["Johnson City", 2, 380, 556, 356, 30],
  ["Dripping Springs", 2, 703, 940, 465, 30],
  ["Blanco", 2, 408, 502, 576, 30],
  ["Buda", 2, 1053, 1125, 600, 30],
  ["Wimberley", 2, 733, 883, 707, 30],
  ["Kyle", 2, 1021, 1078, 718, 30],
  ["Caldwell", 3, 871, 988, 34, 30],
  ["Lexington", 3, 517, 657, 180, 30],
  ["Elgin", 3, 160, 227, 264, 30],
  ["Somerville", 3, 1040, 1186, 270, 30],
  ["Giddings", 3, 605, 730, 474, 30],
  ["Brenham", 3, 1192, 1320, 493, 30],
  ["Bastrop", 3, 199, 308, 565, 30],
  ["Smithville", 3, 359, 496, 698, 30],
];

/* pin tips, north to south */
const pins: [number, number][] = [
  [458.7, 145.9],
  [434.5, 146.5],
  [523.5, 158.2],
  [389.5, 191.5],
  [535.9, 253.5],
  [547.5, 274.5],
  [487.5, 276.9],
  [393.9, 279.5],
  [455.9, 293.5],
  [396.5, 332.9],
];

function MapPanel() {
  return (
    <div className="relative h-[480px] w-[936px] shrink-0 overflow-hidden bg-[#f2efe9]">
      <svg width="936" height="480" viewBox="0 0 936 480" fill="none" strokeLinejoin="round">
        <defs>
          <linearGradient id="pin" x1="0" y1="0" x2="0" y2="1">
            <stop offset="0" stopColor="#4597d2" />
            <stop offset="1" stopColor="#2069bd" />
          </linearGradient>
          <linearGradient id="shade" gradientUnits="userSpaceOnUse" x1="13" y1="40" x2="34" y2="18">
            <stop offset="0" stopColor="#000" stopOpacity=".6" />
            <stop offset="1" stopColor="#000" stopOpacity=".2" />
          </linearGradient>
          <filter id="soft" x="-50%" y="-50%" width="200%" height="200%">
            <feGaussianBlur stdDeviation="2.400" />
          </filter>
          <pattern id="hatch" width="5" height="5" patternUnits="userSpaceOnUse" patternTransform="rotate(40)">
            <rect width="5" height="5" fill="#f5e0da" />
            <path d="M0 0V5" stroke="#f0bcb8" strokeWidth="1" />
          </pattern>
        </defs>
        <path
          d="M342 0H363L363 17 383 24 380 38 370 40 353 28 348 18 339 10Z"
          fill="url(#hatch)"
          stroke="#f0bcb8"
          strokeWidth=".7"
        />
        {tiles.map((t, i) => (
          <g key={i} transform={`translate(${t.x} ${t.y}) scale(.33333)`}>
            <path d={roughen(t.urban, 10, 12)} fill="#dcdad7" />
            <path d={roughen(t.green, 8, 10)} fill="#c3deb4" />
            <path d={roughen(t.lake, 10, 8)} fill="#aad3df" />
            <path d={roughen(t.water, 11, 13)} stroke="#a5d2e2" strokeWidth="3.600" />
            <path d={roughen(t.minor, 4, 22)} stroke="#b8b8bb" strokeWidth="2.800" />
            {i === 1 && (
              <path
                d={roughen("M190 500 245 505 258 540 245 580 180 600 130 615 140 580 135 535 165 515Z", 10, 12)}
                stroke="#b3d9a6"
                strokeWidth="5"
              />
            )}
            {i === 2 && (
              <>
                <path d={roughen("M875 190 895 160 930 130 940 90 910 82 890 88", 8, 12)} stroke="#aad3df" strokeWidth="8" />
                <path d={streets()} stroke="#bdbdc0" strokeWidth="2.600" />
              </>
            )}
            <path d={roughen(t.orange, 3, 30)} stroke="#f7c580" strokeWidth="4" />
            <path d={roughen(t.salmon, 3, 30)} stroke="#f6957b" strokeWidth="4.600" />
            <path d={roughen(t.pink, 2, 30)} stroke="#e46d8e" strokeWidth="5.400" />
            <path d={roughen(t.rail, 3, 26)} stroke="#858585" strokeWidth="3" />
            <path d={roughen(t.brown, 3, 30)} stroke="#9c7e60" strokeWidth="4" />
          </g>
        ))}
        <g fontFamily="'Noto Sans', sans-serif" fill="#2b2b2b" stroke="#f7f5f1" strokeWidth="6" style={{ paintOrder: "stroke" }}>
          {labels.map(([name, t, x1, x2, y, size]) => (
            <text
              key={name}
              transform={`translate(${tiles[t].x} ${tiles[t].y}) scale(.33333)`}
              x={x1}
              y={y}
              fontSize={size}
              textLength={x2 - x1}
            >
              {name}
            </text>
          ))}
        </g>
        {pins.map(([x, y], i) => (
          <g key={i} transform={`translate(${x - 12.5} ${y - 40.5})`}>
            <path d="M12.500 40 18 27C22 19 30 17 33 20S31 30 25 34Z" fill="url(#shade)" filter="url(#soft)" />
          </g>
        ))}
        {pins.map(([x, y], i) => (
          <g key={i} transform={`translate(${x - 12.5} ${y - 40.5})`}>
            <path
              d="M12.500.500C5.900.500.500 5.900.500 12.500c0 2.700.900 5 2 7.200L12.500 40.500l10-20.800c1.100-2.200 2-4.500 2-7.200C24.500 5.900 19.100.500 12.500.500z"
              fill="url(#pin)"
              stroke="#2f72ae"
              strokeWidth=".9"
            />
            <circle cx="12.500" cy="12.800" r="4.300" fill="#fff" />
          </g>
        ))}
      </svg>
      <div className="absolute left-[10px] top-[10px] flex w-[34px] flex-col rounded-[4px] border-2 border-black/25 bg-white bg-clip-padding">
        <span className="flex h-[30px] items-center justify-center border-b border-[#ccc]">
          <svg width="12" height="12" viewBox="0 0 12 12" stroke="#000" strokeWidth="2.200">
            <path d="M6 0V12M0 6H12" />
          </svg>
        </span>
        <span className="flex h-[30px] items-center justify-center">
          <svg width="12" height="12" viewBox="0 0 12 12" stroke="#000" strokeWidth="2.200">
            <path d="M0 6H12" />
          </svg>
        </span>
      </div>
      <div className="absolute bottom-0 right-0 bg-white/70 px-[5px] font-['Liberation_Sans',sans-serif] text-[11px] leading-4 text-[#0078a8]">
        Leaflet
      </div>
    </div>
  );
}

/* -------------------------------------------------------------- pie chart */

const slices = [
  { name: "Domestic Shorthair Mix", color: "#636efa", share: 40, from: 0, lx: 89.5, ly: -26 },
  { name: "Siamese Mix", color: "#ef553b", share: 10, from: 90, lx: -32, ly: -95 },
  { name: "Labrador Retriever/Australian Cattle Dog", color: "#21ce96", share: 10, from: 80, lx: -83, ly: -57 },
  { name: "Chihuahua Shorthair Mix", color: "#ab63fa", share: 10, from: 70, lx: -103, ly: 3 },
  { name: "Boxer/Bullmastiff", color: "#ffa15a", share: 10, from: 60, lx: -83, ly: 63 },
  { name: "Dachshund Wirehair Mix", color: "#2fd3f3", share: 10, from: 50, lx: -32, ly: 101 },
  { name: "Pit Bull Mix", color: "#ff6692", share: 10, from: 40, lx: 32, ly: 101 },
];

function arc(from: number, share: number) {
  const R = 134.5;
  const r = 53.7;
  const pt = (rad: number, p: number) => {
    const a = (p / 100) * Math.PI * 2;
    return `${(Math.sin(a) * rad).toFixed(2)} ${(-Math.cos(a) * rad).toFixed(2)}`;
  };
  const to = from + share;
  return `M${pt(R, from)}A${R} ${R} 0 0 1 ${pt(R, to)}L${pt(r, to)}A${r} ${r} 0 0 0 ${pt(r, from)}Z`;
}

function BreedChart() {
  return (
    <div className="flex flex-1 items-start pl-[79px] pt-[68px]">
      <svg width="270" height="270" viewBox="-135.5 -135 270 270" className="mt-3 shrink-0" fontFamily="'Liberation Mono', monospace" textAnchor="middle">
        {slices.map((s) => (
          <path key={s.name} d={arc(s.from, s.share)} fill={s.color} stroke="#444" strokeWidth=".5" />
        ))}
        {slices.map((s) => (
          <text key={s.name} x={s.lx} y={s.ly} fontSize="11.500" fill={s.share === 40 ? "#fff" : "#444"} opacity={s.share === 40 ? 1 : 0.85}>
            {s.share}%
          </text>
        ))}
        <text x="-1" y="5" fontSize="17" fill="#f2f5fa">
          Breeds
        </text>
      </svg>
      <ul className="ml-[19px] font-['Liberation_Mono',monospace] text-[12px] text-[#f2f5fa]">
        {slices.map((s) => (
          <li key={s.name} className="flex h-[19px] items-start">
            <i className="mt-px h-[13px] w-[13px] border border-[#444]/60" style={{ backgroundColor: s.color }} />
            <span className="ml-[13.5px] leading-[17px]">{s.name}</span>
          </li>
        ))}
      </ul>
    </div>
  );
}

/* ------------------------------------------------------------------- page */

export default function App() {
  return (
    <div className="h-[1136px] w-[1871px] overflow-hidden bg-[#c9c9c9]">
      <div className="flex h-full w-full flex-col overflow-hidden rounded-[6px] bg-[#222]">
        <TabStrip />
        <Toolbar />
        <h1 className="h-[76px] pt-[10px] text-center font-['Lato',sans-serif] text-[40px] font-medium leading-[48px] tracking-[-0.15px] text-white">
          Animal Shelter Dashboard
        </h1>
        <Filters />
        <DataTable />
        <Pagination />
        <div className="flex pl-[10px]">
          <MapPanel />
          <BreedChart />
        </div>
      </div>
    </div>
  );
}
